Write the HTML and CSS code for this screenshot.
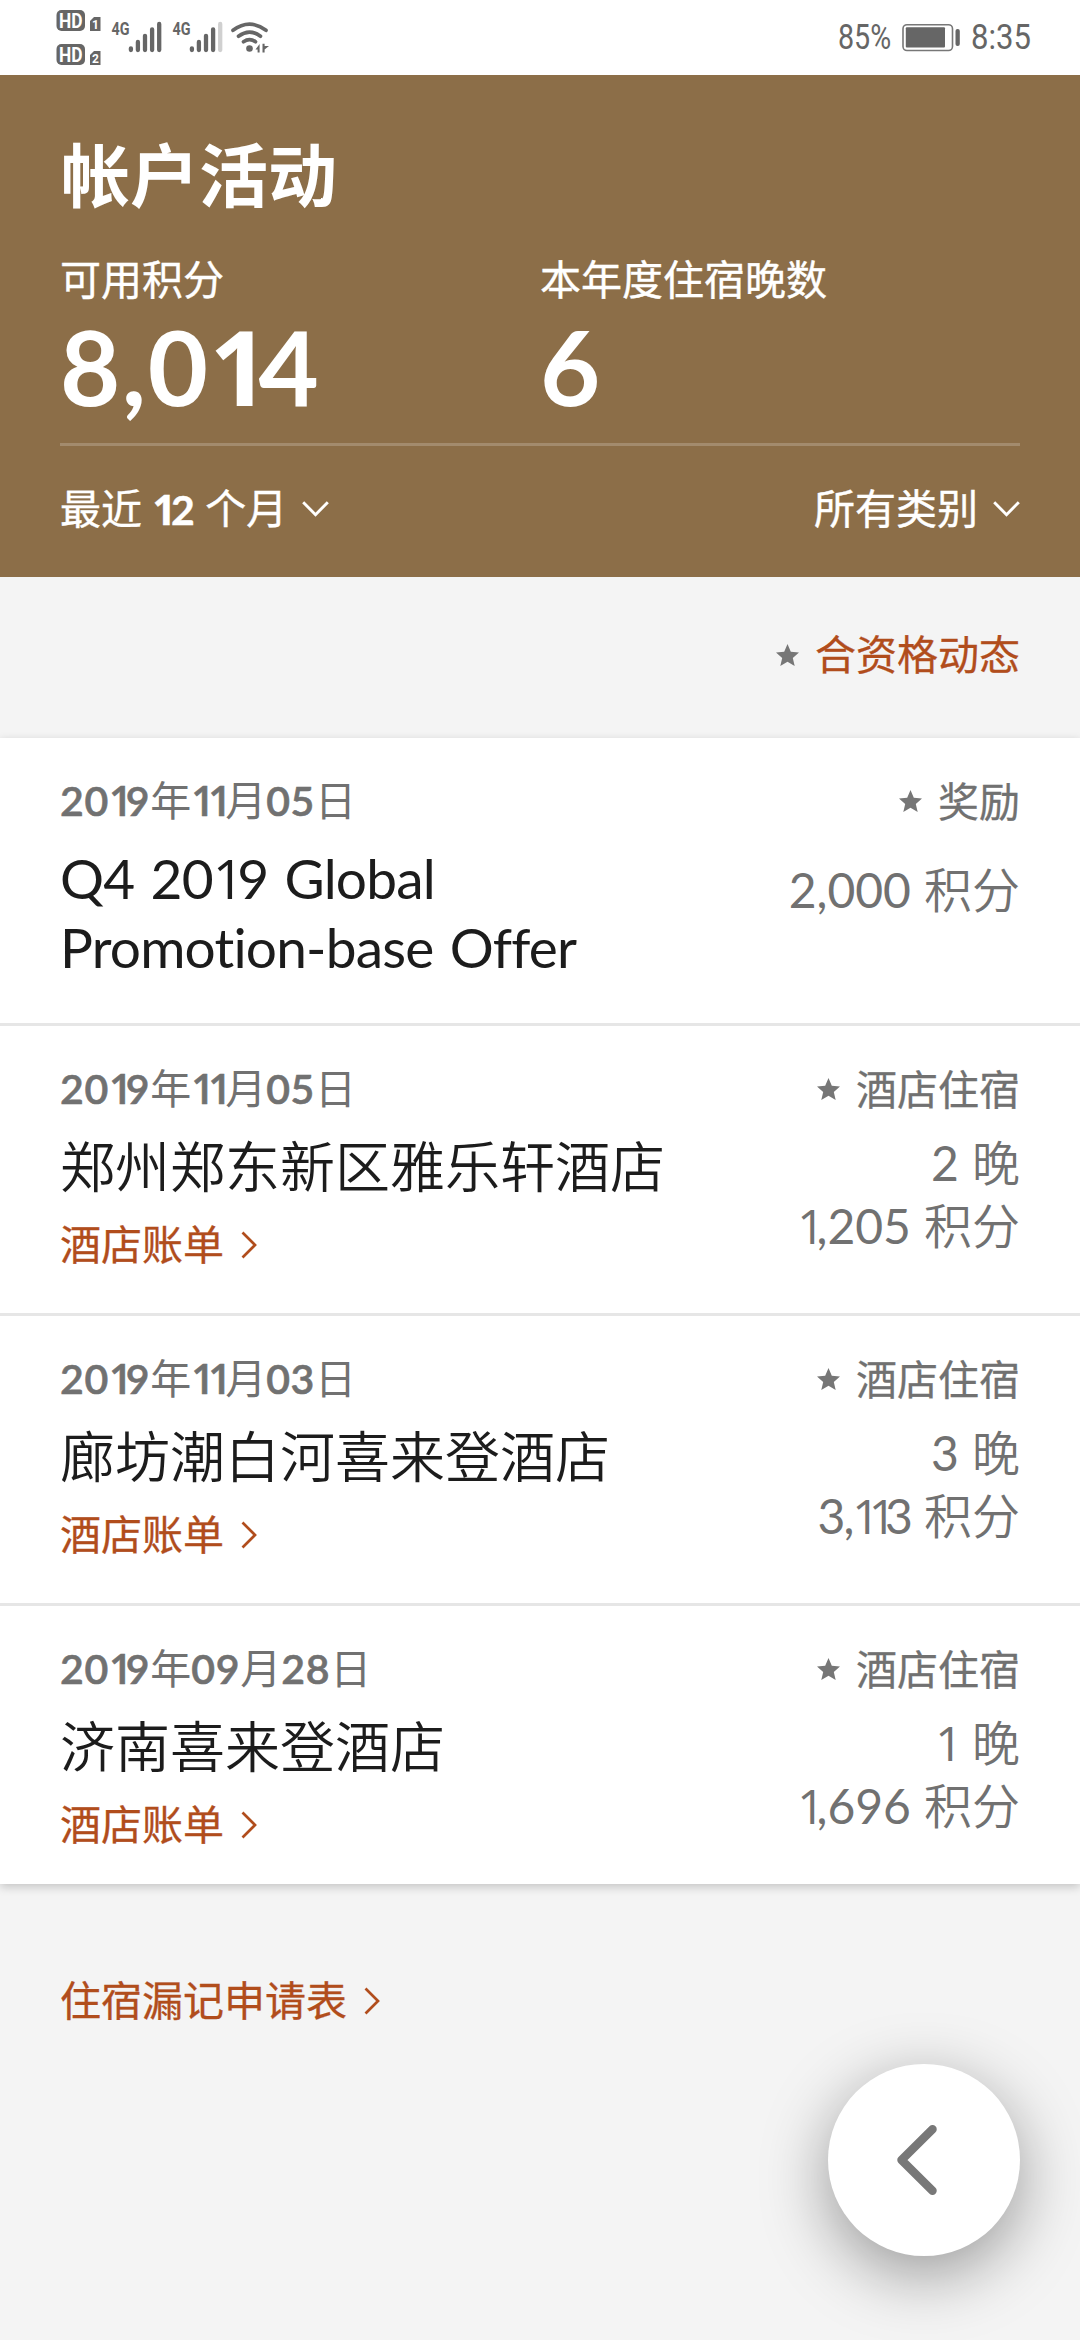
FILE: index.html
```html
<!DOCTYPE html>
<html lang="zh-CN">
<head>
<meta charset="utf-8">
<title>帐户活动</title>
<link rel="stylesheet" href="styles.css">
</head>
<body>
<svg class="defs" width="0" height="0" aria-hidden="true">
  <symbol id="star" viewBox="0 0 23 22"><path d="M11.5 0 14.8 7.7 23 8.4 16.8 13.9 18.7 22 11.5 17.7 4.3 22 6.2 13.9 0 8.4 8.2 7.7Z" fill="#767676"/></symbol>
  <symbol id="right" viewBox="0 0 16 28"><path d="M1.5 1.5 14 14 1.5 26.500" fill="none" stroke="#b14d1c" stroke-width="2.7"/></symbol>
  <symbol id="down" viewBox="0 0 27 16"><path d="M1.200 1.200 13.500 13.700 25.800 1.200" fill="none" stroke="#fff" stroke-width="2.9"/></symbol>
</svg>

<header class="status">
  <svg class="signals" width="216" height="60" viewBox="56 8 216 60">
    <g fill="#666">
      <rect x="56.500" y="10" width="28.500" height="21" rx="5"/>
      <rect x="56.500" y="44" width="28.500" height="21" rx="5"/>
      <path d="M94 17h6.500v14H90V21Z"/>
      <path d="M94 51h6.500v14H90V55Z"/>
      <g class="g4"><text x="111.500" y="35" textLength="18" lengthAdjust="spacingAndGlyphs">4G</text><text x="172.500" y="35" textLength="18" lengthAdjust="spacingAndGlyphs">4G</text></g>
      <g class="hd"><text x="59" y="27.500" textLength="23.500" lengthAdjust="spacingAndGlyphs">HD</text><text x="59" y="61.500" textLength="23.500" lengthAdjust="spacingAndGlyphs">HD</text></g>
      <g class="sim"><text x="92" y="29">1</text><text x="92" y="63">2</text></g>
    </g>
    <g stroke="#666" stroke-width="4.300" stroke-linecap="round">
      <path d="M130.900 48.300V50M137.900 42V50M145 35.800V50M152.100 29.300V50M159.200 24V50"/>
      <path d="M191.900 48.300V50M198.900 42V50M206 35.800V50M213.100 29.300V50"/>
      <path d="M220.200 24V50" stroke="#d0d0d0"/>
      <path d="M233 30.300Q249.500 18 266 30.300M238.500 36.200Q249.500 28 260.500 36.200M243.500 41.700Q249.500 37.700 255.500 41.700" fill="none" stroke-width="3.700"/>
    </g>
    <circle cx="249.500" cy="48.500" r="3.300" fill="#666"/>
    <path d="M259.600 44V52.500H257.600V49.500H255.500Z M262.500 43.700V52.500H264.600V49.500L269 46H264.600V43.700Z" fill="#666"/>
  </svg>
  <div class="power">
    <span class="narrow pct">85%</span>
    <svg class="battery" width="60" height="30" viewBox="901 23 60 30">
      <rect x="903" y="24.700" width="49.500" height="25.800" rx="4" fill="none" stroke="#777" stroke-width="1.600"/>
      <rect x="905.800" y="27.300" width="39.200" height="20.300" rx="1" fill="#666"/>
      <rect x="955.500" y="29" width="4.300" height="17" rx="2" fill="#666"/>
    </svg>
    <span class="narrow clock">8:35</span>
  </div>
</header>

<section class="summary">
  <h1>帐户活动</h1>
  <div class="stats">
    <div class="stat"><div class="label">可用积分</div><div class="value">8,0<b class="one">1</b>4</div></div>
    <div class="stat"><div class="label">本年度住宿晚数</div><div class="value">6</div></div>
  </div>
  <div class="filters">
    <div class="filter">最近 <span class="num"><b class="one">1</b>2</span> 个月<svg width="27" height="16"><use href="#down"/></svg></div>
    <div class="filter">所有类别<svg width="27" height="16"><use href="#down"/></svg></div>
  </div>
</section>

<div class="legend"><svg class="star"><use href="#star"/></svg><span>合资格动态</span></div>

<main class="list">
  <article class="row first">
    <div class="meta"><div class="date"><span class="num">20<b class="one">1</b>9</span>年<span class="num"><b class="one">1</b><b class="one">1</b></span>月<span class="num">05</span>日</div><div class="kind"><svg class="star"><use href="#star"/></svg>奖励</div></div>
    <div class="body">
      <div class="left"><h2 class="latin">Q4 20<b class="one">1</b>9 Global<br>Promotion-base Offer</h2></div>
      <div class="amounts"><div><span class="num">2,000</span> 积分</div></div>
    </div>
  </article>
  <article class="row">
    <div class="meta"><div class="date"><span class="num">20<b class="one">1</b>9</span>年<span class="num"><b class="one">1</b><b class="one">1</b></span>月<span class="num">05</span>日</div><div class="kind"><svg class="star"><use href="#star"/></svg>酒店住宿</div></div>
    <div class="body">
      <div class="left"><h2>郑州郑东新区雅乐轩酒店</h2><a class="link">酒店账单<svg width="16" height="28"><use href="#right"/></svg></a></div>
      <div class="amounts"><div><span class="num">2</span> 晚</div><div><span class="num"><b class="one">1</b>,205</span> 积分</div></div>
    </div>
  </article>
  <article class="row">
    <div class="meta"><div class="date"><span class="num">20<b class="one">1</b>9</span>年<span class="num"><b class="one">1</b><b class="one">1</b></span>月<span class="num">03</span>日</div><div class="kind"><svg class="star"><use href="#star"/></svg>酒店住宿</div></div>
    <div class="body">
      <div class="left"><h2>廊坊潮白河喜来登酒店</h2><a class="link">酒店账单<svg width="16" height="28"><use href="#right"/></svg></a></div>
      <div class="amounts"><div><span class="num">3</span> 晚</div><div><span class="num tight">3,<b class="one">1</b><b class="one">1</b>3</span> 积分</div></div>
    </div>
  </article>
  <article class="row last">
    <div class="meta"><div class="date"><span class="num">20<b class="one">1</b>9</span>年<span class="num">09</span>月<span class="num">28</span>日</div><div class="kind"><svg class="star"><use href="#star"/></svg>酒店住宿</div></div>
    <div class="body">
      <div class="left"><h2>济南喜来登酒店</h2><a class="link">酒店账单<svg width="16" height="28"><use href="#right"/></svg></a></div>
      <div class="amounts"><div><span class="num single"><b class="one">1</b></span> 晚</div><div><span class="num"><b class="one">1</b>,696</span> 积分</div></div>
    </div>
  </article>
</main>

<footer class="foot"><a class="link">住宿漏记申请表<svg width="16" height="28"><use href="#right"/></svg></a></footer>

<button class="back" aria-label="返回"><svg width="42" height="74" viewBox="0 0 42 74"><path d="M36.500 6.200 5.500 37 36.500 67.800" fill="none" stroke="#787878" stroke-width="8.500" stroke-linecap="round" stroke-linejoin="round"/></svg></button>
</body>
</html>
```
FILE: styles.css
```css
* { box-sizing: border-box; }
body {
  margin: 0;
  width: 1080px;
  height: 2340px;
  background: #f4f4f4;
  color: #1c1c1c;
  font-family: Lato, "Noto Sans CJK SC", sans-serif;
  font-size: 41px;
  font-variant-ligatures: none;
  overflow: hidden;
}
.defs { position: absolute; }
h1, h2 { margin: 0; }
svg { flex: none; }

/* the digit 1 is set narrower than the other figures */
.one {
  font-family: "Open Sans", sans-serif;
  font-weight: inherit;
  letter-spacing: -.17em;
}

.status {
  height: 75px;
  padding: 0 51px 0 56px;
  background: #fff;
  color: #666;
  display: flex;
  justify-content: space-between;
  align-items: center;
}
.signals text { font-family: Roboto, sans-serif; font-weight: 700; }
.g4 { font-size: 18px; }
.hd { font-size: 20px; fill: #fff; }
.sim { font-size: 12px; fill: #fff; }
.power { display: flex; align-items: center; height: 75px; }
.narrow {
  font-family: Roboto, sans-serif;
  font-size: 34.500px;
  line-height: 77px;
  transform-origin: 0 50%;
  white-space: nowrap;
}
.pct { width: 64px; transform: translateX(1px) scaleX(.83); }
.clock { width: 59px; margin-left: 9px; transform: translateX(1px) scaleX(.9); }

.summary {
  height: 502px;
  padding: 55px 60px 0;
  background: #8c6e48;
  color: #fff;
}
h1 { font-size: 69px; font-weight: 700; line-height: 92px; padding-left: 1px; }
.stats {
  display: grid;
  grid-template-columns: 1fr 1fr;
  height: 224px;
  padding-top: 33px;
  border-bottom: 3px solid #a38b6d;
}
.label { line-height: 50px; -webkit-text-stroke: .4px; }
.value { font-size: 104px; font-weight: 700; line-height: 122px; letter-spacing: 1.500px; }
.value .one { font-weight: 700; letter-spacing: -.1em; }
.filters { display: flex; justify-content: space-between; height: 126px; }
.filter { display: flex; align-items: center; line-height: 126px; white-space: pre; -webkit-text-stroke: .4px; }
.filter svg { margin-left: 15px; }
.filter .num { font-weight: 700; }
.filter .one { letter-spacing: -.12em; }

.legend {
  height: 161px;
  padding: 0 60px 11px;
  display: flex;
  justify-content: flex-end;
  align-items: center;
  color: #b14d1c;
  -webkit-text-stroke: .3px;
}
.star { width: 23px; height: 22px; margin-right: 16px; }
.legend .star { margin-top: 6px; }

.list { background: #fff; box-shadow: 0 3px 9px rgba(0, 0, 0, .2); }
.row { height: 290px; padding: 38px 60px 0; border-bottom: 3px solid #e6e6e6; }
.first { height: 288px; }
.last { height: 278px; border-bottom: 0; }
.meta, .body { display: flex; justify-content: space-between; }
.meta { height: 50px; line-height: 49px; color: #717171; }
.date .num { font-weight: 600; letter-spacing: .7px; -webkit-text-stroke: .6px; }
.date .one { letter-spacing: -.16em; }
.kind { display: flex; align-items: center; -webkit-text-stroke: .3px; }
h2 { font-size: 55px; font-weight: 350; line-height: 80px; padding-top: 12px; font-family: Lato, "Noto Sans CJK SC DemiLight", "Noto Sans CJK SC", sans-serif; }
.latin { font-weight: 400; line-height: 69px; padding-top: 17px; letter-spacing: -.8px; word-spacing: 3px; }
.latin .one { letter-spacing: -.13em; }
.link { display: flex; align-items: center; line-height: 50px; color: #b14d1c; -webkit-text-stroke: .3px; }
.left .link { margin-top: 14px; }
.link svg { margin-left: 17px; }
.amounts {
  padding-top: 17px;
  font-family: Lato, "Noto Sans CJK SC DemiLight", "Noto Sans CJK SC", sans-serif;
  font-size: 48px;
  font-weight: 350;
  line-height: 63px;
  color: #717171;
  text-align: right;
}
.amounts .num { font-weight: 400; }
.amounts .tight { letter-spacing: -2px; }
.tight .one { letter-spacing: -.23em; }
.single .one { letter-spacing: -.08em; }
.first .amounts { padding-top: 32px; }

.foot { padding: 92px 60px 0; }

.back {
  position: absolute;
  left: 828px;
  top: 2064px;
  width: 192px;
  height: 192px;
  padding: 0 14px 0 0;
  border: 0;
  border-radius: 50%;
  background: #fff;
  display: flex;
  align-items: center;
  justify-content: center;
  box-shadow: 0 18px 66px rgba(0, 0, 0, .38);
}
```
